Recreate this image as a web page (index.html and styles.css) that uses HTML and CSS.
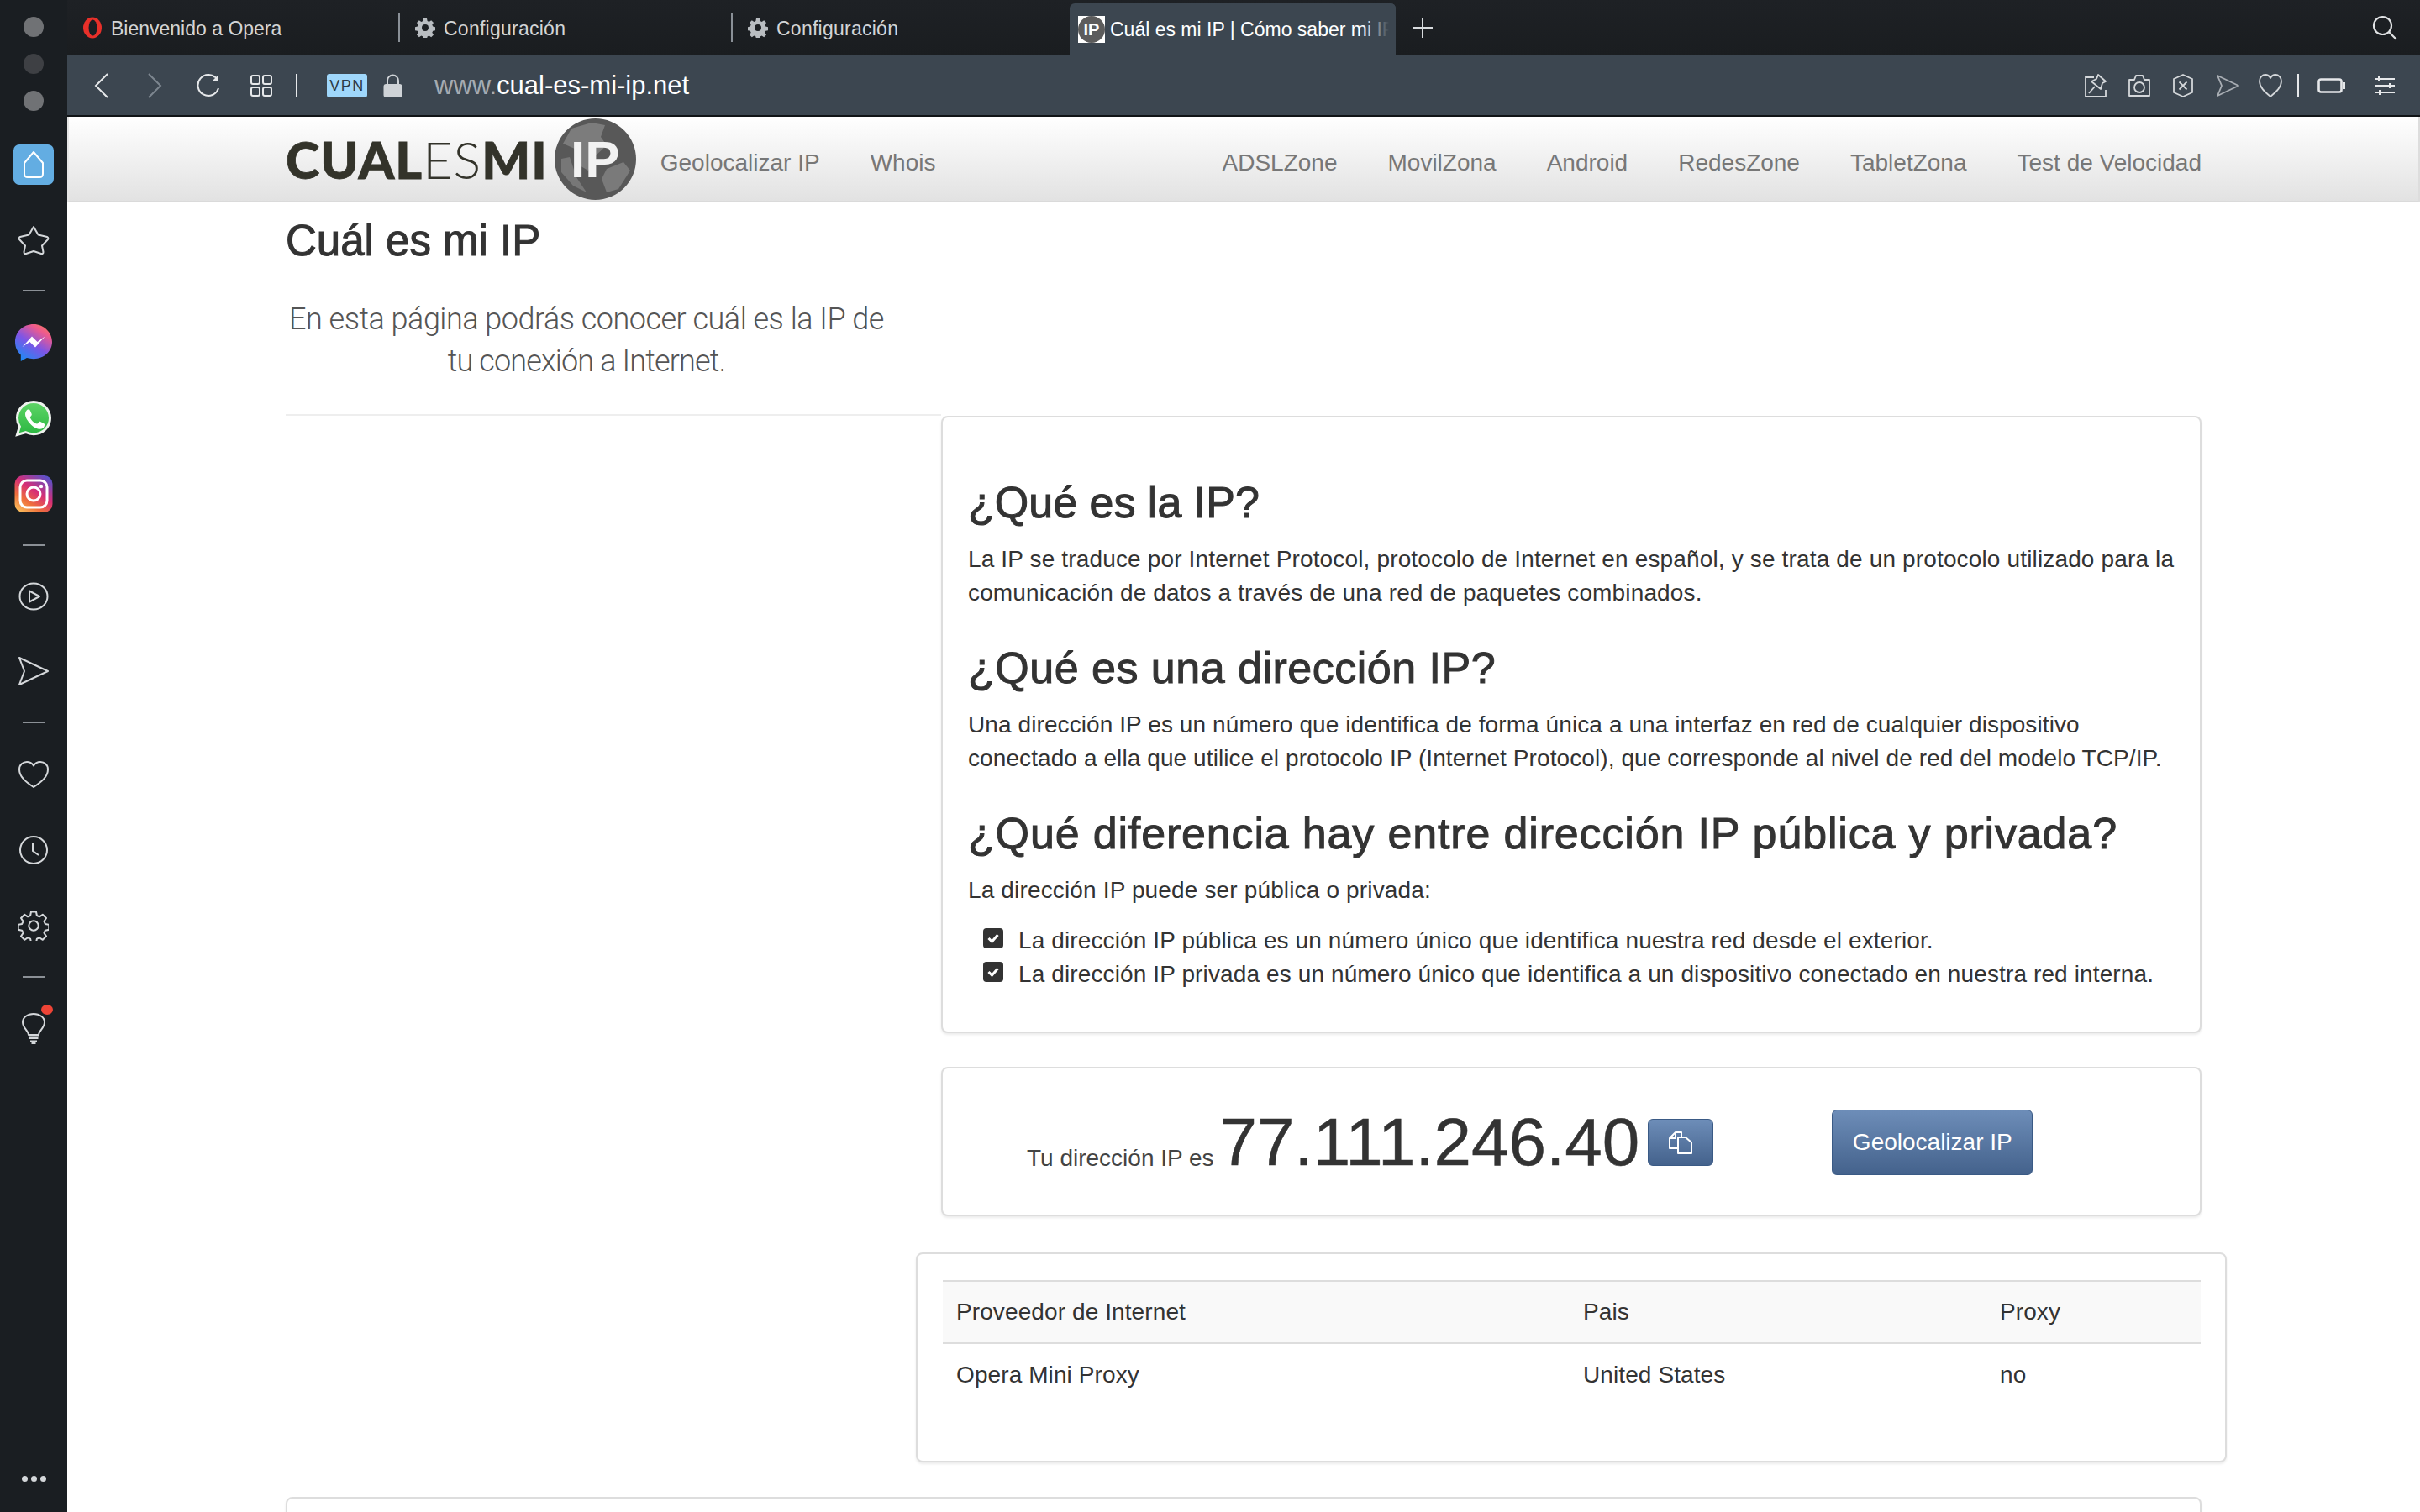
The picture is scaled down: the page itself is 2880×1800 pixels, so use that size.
FILE: index.html
```html
<!DOCTYPE html>
<html lang="es">
<head>
<meta charset="utf-8">
<title>Cuál es mi IP</title>
<link rel="stylesheet" href="styles.css">
</head>
<body>
<svg class="defs" width="0" height="0" aria-hidden="true">
  <defs>
    <linearGradient id="ms" x1="0.2" y1="1" x2="0.85" y2="0"><stop offset="0" stop-color="#1b8cf5"/><stop offset="0.45" stop-color="#7d55e6"/><stop offset="0.8" stop-color="#ee5a8e"/><stop offset="1" stop-color="#f77b5b"/></linearGradient>
    <linearGradient id="ig" x1="0.1" y1="1" x2="0.8" y2="0"><stop offset="0" stop-color="#fbc55f"/><stop offset="0.3" stop-color="#ef6f3c"/><stop offset="0.6" stop-color="#d62e77"/><stop offset="1" stop-color="#5b51c8"/></linearGradient>
    <linearGradient id="wa" x1="0" y1="1" x2="0" y2="0"><stop offset="0" stop-color="#2bb741"/><stop offset="1" stop-color="#5fd567"/></linearGradient>
    <symbol id="gear" viewBox="0 0 24 24"><path fill="#b9bdc1" fill-rule="evenodd" d="M10 1h4l.6 3 2 .9 2.6-1.7 2.8 2.8-1.7 2.6.9 2 3 .6v4l-3 .6-.9 2 1.700 2.600-2.800 2.800-2.600-1.700-2 .9-.6 3h-4l-.6-3-2-.9-2.600 1.700-2.800-2.800 1.700-2.600-.9-2-3-.6v-4l3-.6.9-2-1.700-2.600 2.800-2.800 2.600 1.700 2-.9zM12 8a4 4 0 1 0 0 8a4 4 0 0 0 0-8z"/></symbol>
  </defs>
</svg>
<div class="app">
  <aside class="side">
    <div class="lights">
      <span class="light"></span>
      <span class="light dim"></span>
      <span class="light"></span>
    </div>
    <div class="home">
      <svg width="26" height="34" viewBox="0 0 26 34" fill="none" stroke="#fff" stroke-width="2"><path d="M13 2 L24 15 V28 Q24 32 20 32 H6 Q2 32 2 28 V15 Z" stroke-linejoin="round"/></svg>
    </div>
    <div class="side-item first-item">
      <svg width="38" height="36" viewBox="0 0 38 36" fill="none" stroke="#d4d7da" stroke-width="2" stroke-linejoin="round"><path d="M19 2 L24.500 11.500 L35 14 Q37 15 36 17 L29 24.500 L30.500 32 Q30.500 34.500 28 34 L19 31 L10 34 Q7.500 34.500 7.500 32 L9 24.500 L2 17 Q1 15 3 14 L13.500 11.500 Z"/></svg>
    </div>
    <div class="side-sep"></div>
    <div class="side-item">
      <svg width="46" height="46" viewBox="0 0 46 46"><path fill="url(#ms)" d="M23 1C10.500 1 1 10 1 22c0 6.300 2.600 11.700 6.800 15.500V45l7.100-3.900c2.500.7 5.300 1.100 8.100 1.100 12.500 0 22-9.200 22-20.200S35.500 1 23 1z"/><path fill="#fff" d="M9.500 28 l11.500-12.500 6.500 6.500 9-6.500-11.500 13-6.500-6.500z"/></svg>
    </div>
    <div class="side-item">
      <svg width="44" height="44" viewBox="0 0 44 44"><path fill="url(#wa)" stroke="#eef2ee" stroke-width="3" d="M22 2.500C11.200 2.500 2.500 11 2.500 21.800c0 3.700 1 7 2.900 10L2.500 41.500l10-3c2.800 1.500 6 2.300 9.500 2.300 10.800 0 19.500-8.500 19.500-19S32.800 2.500 22 2.500z"/><path fill="#fff" d="M15.500 11.500c-1 0-3.500 2-3.500 5.500s2.500 7 3 7.700c.5.700 5 7.700 12 9.700 4.500 1.300 7-.7 7.700-3 .4-1.300.4-2.500.3-2.700-.5-.7-5.300-3-6-3-.7 0-1.800 2.500-2.700 2.700-1 .2-3.500-1-5.500-3s-3.200-4-3-4.700c.2-.8 2-2 2-3.300 0-.7-2-5.500-2.700-5.700-.6-.2-1-.2-1.600-.2z"/></svg>
    </div>
    <div class="side-item">
      <svg width="46" height="44" viewBox="0 0 46 44"><rect x="0.500" y="0" width="45" height="44" rx="10" fill="url(#ig)"/><rect x="7" y="6" width="32" height="32" rx="8" fill="none" stroke="#fff" stroke-width="3"/><circle cx="23" cy="22" r="8" fill="none" stroke="#fff" stroke-width="3"/><circle cx="32" cy="13" r="2.200" fill="#fff"/></svg>
    </div>
    <div class="side-sep tight-sep"></div>
    <div class="side-item tight">
      <svg width="36" height="34" viewBox="0 0 36 34" fill="none" stroke="#d4d7da" stroke-width="2"><ellipse cx="18" cy="17" rx="16.500" ry="15.500"/><path d="M13 10.500 L25 17 L13 23.500 Z" stroke-linejoin="round"/></svg>
    </div>
    <div class="side-item tight">
      <svg width="38" height="36" viewBox="0 0 38 36" fill="none" stroke="#d4d7da" stroke-width="2" stroke-linejoin="round"><path d="M2 2 L36 18 L2 34 L8 18 Z"/></svg>
    </div>
    <div class="side-sep"></div>
    <div class="side-item">
      <svg width="38" height="34" viewBox="0 0 38 34" fill="none" stroke="#d4d7da" stroke-width="2" stroke-linejoin="round"><path d="M19 32 C10 26 2 20 2 11 C2 5 6.500 2 11 2 C15 2 17.500 4 19 6.500 C20.500 4 23 2 27 2 C31.500 2 36 5 36 11 C36 20 28 26 19 32 Z"/></svg>
    </div>
    <div class="side-item">
      <svg width="36" height="36" viewBox="0 0 36 36" fill="none" stroke="#d4d7da" stroke-width="2"><circle cx="18" cy="18" r="16"/><path d="M17 9 V19 L24 24"/></svg>
    </div>
    <div class="side-item">
      <svg width="36" height="36" viewBox="0 0 24 24" fill="none" stroke="#d4d7da" stroke-width="1.350" stroke-linejoin="round"><path d="M10 1h4l.6 3 2 .9 2.600-1.700 2.800 2.800-1.700 2.600.9 2 3 .6v4l-3 .6-.9 2 1.700 2.600-2.800 2.800-2.600-1.700-2 .9-.6 3h-4l-.6-3-2-.9-2.600 1.700-2.800-2.800 1.700-2.600-.9-2-3-.6v-4l3-.6.9-2-1.700-2.600 2.800-2.800 2.600 1.700 2-.9z"/><circle cx="12" cy="12" r="3.800"/></svg>
    </div>
    <div class="side-sep tight-sep"></div>
    <div class="side-item bulb-item">
      <svg width="30" height="38" viewBox="0 0 30 38" fill="none" stroke="#d4d7da" stroke-width="2"><path d="M9 27 C9 22 2 19 2 12 C2 6 8 2 15 2 C22 2 28 6 28 12 C28 19 21 22 21 27 Z" stroke-linejoin="round"/><path d="M9 27.500 H21 M9.500 31 H20.500 M11 34.500 H19"/><path d="M12.500 37 H17.500"/></svg>
      <span class="notif"></span>
    </div>
    <div class="side-dots"><span></span><span></span><span></span></div>
  </aside>

  <div class="main">
    <div class="tabs">
      <div class="tab">
        <svg class="favicon" width="24" height="26" viewBox="0 0 24 26"><ellipse cx="12" cy="13" rx="11" ry="12.500" fill="#e8302a"/><ellipse cx="12.500" cy="13" rx="5" ry="9.500" fill="#1b1e22"/></svg>
        <span class="tab-label">Bienvenido a Opera</span>
      </div>
      <div class="tab">
        <svg class="favicon" width="24" height="24"><use href="#gear"/></svg>
        <span class="tab-label tab-config">Configuración</span>
      </div>
      <div class="tab tab-last">
        <svg class="favicon" width="24" height="24"><use href="#gear"/></svg>
        <span class="tab-label tab-config">Configuración</span>
      </div>
      <div class="tab-active">
        <span class="fav-ip"><span class="fav-ip-disc">IP</span></span>
        <span class="tab-label tab-label-active">Cuál es mi IP | Cómo saber mi IP</span>
      </div>
      <svg class="plus" width="24" height="24" viewBox="0 0 24 24" stroke="#d8dbde" stroke-width="2"><path d="M12 0 V24 M0 12 H24"/></svg>
      <svg class="search" width="30" height="30" viewBox="0 0 30 30" fill="none" stroke="#e0e2e4" stroke-width="2.200"><circle cx="12.500" cy="12.500" r="10.500"/><path d="M20 20 L29 29"/></svg>
    </div>

    <div class="toolbar">
      <svg class="tb-back" width="18" height="30" viewBox="0 0 18 30" fill="none" stroke="#e6e8ea" stroke-width="2"><path d="M16 1 L2 15 L16 29"/></svg>
      <svg class="tb-forward" width="18" height="30" viewBox="0 0 18 30" fill="none" stroke="#7d8690" stroke-width="2"><path d="M2 1 L16 15 L2 29"/></svg>
      <svg class="tb-reload" width="28" height="28" viewBox="0 0 28 28" fill="none" stroke="#e6e8ea" stroke-width="2"><path d="M24 6 A12.500 12.500 0 1 0 26 17"/><path d="M26 1 V9 H18" fill="#e6e8ea" stroke="none"/></svg>
      <svg class="tb-grid" width="26" height="26" viewBox="0 0 26 26" fill="none" stroke="#e6e8ea" stroke-width="2"><rect x="1" y="1" width="10" height="10" rx="2"/><rect x="15" y="1" width="10" height="10" rx="2"/><rect x="1" y="15" width="10" height="10" rx="2"/><rect x="15" y="15" width="10" height="10" rx="2"/></svg>
      <span class="tb-sep"></span>
      <span class="vpn">VPN</span>
      <svg class="tb-lock" width="23" height="28" viewBox="0 0 23 28"><path fill="none" stroke="#cfd3d7" stroke-width="2" d="M5 14 V8 A6.500 6.500 0 0 1 18 8 V14"/><rect x="0.500" y="12" width="22" height="16" rx="3" fill="#cfd3d7"/></svg>
      <div class="url"><span class="url-www">www.</span>cual-es-mi-ip.net</div>
      <div class="tb-right">
        <svg class="i-pin" width="26" height="28" viewBox="0 0 26 28" fill="none" stroke="#d4d7da" stroke-width="1.800"><path d="M11 4 H1 V27 H25 V19"/><path d="M5 23 L12 15"/><path d="M16 1 L25 9 L21 11 L19 18 L8 9 L14 6 Z" stroke-linejoin="round"/></svg>
        <svg class="i-cam" width="26" height="26" viewBox="0 0 26 26" fill="none" stroke="#d4d7da" stroke-width="1.800"><path d="M1 6 H7 L9 1 H17 L19 6 H25 V25 H1 Z" stroke-linejoin="round"/><circle cx="13" cy="15" r="6"/></svg>
        <svg class="i-shield" width="24" height="28" viewBox="0 0 24 28" fill="none" stroke="#d4d7da" stroke-width="1.800"><path d="M12 1 L23 6 V22 L12 27 L1 22 V6 Z" stroke-linejoin="round"/><path d="M7.500 9.500 L16.500 18.500 M16.500 9.500 L7.500 18.500"/></svg>
        <svg class="i-send" width="27" height="26" viewBox="0 0 27 26" fill="none" stroke="#a9aeb4" stroke-width="1.800" stroke-linejoin="round"><path d="M1 1 L26 13 L1 25 L6 13 Z"/></svg>
        <svg class="i-heart" width="28" height="28" viewBox="0 0 28 28" fill="none" stroke="#d4d7da" stroke-width="1.800" stroke-linejoin="round"><path d="M14 27 C7 21 1 16 1 8.500 C1 4 4.500 1 8 1 C11 1 13 3 14 5 C15 3 17 1 20 1 C23.500 1 27 4 27 8.500 C27 16 21 21 14 27 Z"/></svg>
        <span class="tb-sep tb-sep-right"></span>
        <svg class="i-batt" width="33" height="18" viewBox="0 0 33 18" fill="none" stroke="#e6e8ea" stroke-width="2.600"><rect x="1.500" y="1.500" width="27" height="15" rx="2.500"/><rect x="30" y="5" width="3" height="8" fill="#e6e8ea" stroke="none"/></svg>
        <svg class="i-sliders" width="24" height="24" viewBox="0 0 24 24" stroke="#e6e8ea" stroke-width="2"><path d="M0 4 H24 M0 12 H24 M0 20 H24 M5 1 V7 M18 9 V15 M6 17 V23"/></svg>
      </div>
    </div>

    <div class="page">
      <nav class="nav">
        <a class="logo">
          <span class="logo-word"><b>CUAL</b><span class="logo-thin">ES</span><b>MI</b></span>
          <span class="logo-disc">
            <svg class="logo-map" width="97" height="97" viewBox="0 0 97 97"><path fill="#7c7c7c" d="M20 12 L44 5 L60 8 L55 22 L62 32 L48 45 L40 62 L28 55 L24 36 L10 30 Z"/><path fill="#7a7a7a" d="M62 60 L82 52 L90 62 L76 84 L62 88 L56 72 Z"/><path fill="#777" d="M8 48 L18 46 L26 70 L38 88 L22 80 L8 64 Z"/></svg>
            <span class="logo-ip">IP</span>
          </span>
        </a>
        <a class="nav-link">Geolocalizar IP</a>
        <a class="nav-link">Whois</a>
        <span class="nav-space"></span>
        <a class="nav-link">ADSLZone</a>
        <a class="nav-link">MovilZona</a>
        <a class="nav-link">Android</a>
        <a class="nav-link">RedesZone</a>
        <a class="nav-link">TabletZona</a>
        <a class="nav-link">Test de Velocidad</a>
      </nav>

      <div class="container">
        <h1 class="title">Cuál es mi IP</h1>
        <p class="lead">En esta página podrás conocer cuál es la IP de<br><span class="lead-2">tu conexión a Internet.</span></p>
        <div class="columns">
          <div class="left"><hr class="rule"></div>
          <div class="right">
            <section class="card card-info">
              <h2>¿Qué es la IP?</h2>
              <p>La IP se traduce por Internet Protocol, protocolo de Internet en español, y se trata de un protocolo utilizado para la comunicación de datos a través de una red de paquetes combinados.</p>
              <h2 class="h-mid">¿Qué es una dirección IP?</h2>
              <p class="p-narrow">Una dirección IP es un número que identifica de forma única a una interfaz en red de cualquier dispositivo conectado a ella que utilice el protocolo IP (Internet Protocol), que corresponde al nivel de red del modelo TCP/IP.</p>
              <h2 class="h-long">¿Qué diferencia hay entre dirección IP pública y privada?</h2>
              <p class="p-tight">La dirección IP puede ser pública o privada:</p>
              <ul class="checks">
                <li><span class="check"><svg width="14" height="12" viewBox="0 0 14 12" fill="none" stroke="#fff" stroke-width="3"><path d="M1.500 6 L5.500 10 L12.500 2"/></svg></span>La dirección IP pública es un número único que identifica nuestra red desde el exterior.</li>
                <li><span class="check"><svg width="14" height="12" viewBox="0 0 14 12" fill="none" stroke="#fff" stroke-width="3"><path d="M1.500 6 L5.500 10 L12.500 2"/></svg></span>La dirección IP privada es un número único que identifica a un dispositivo conectado en nuestra red interna.</li>
              </ul>
            </section>

            <section class="card card-ip">
              <span class="ip-label">Tu dirección IP es</span>
              <span class="ip-value">77.111.246.40</span>
              <button class="btn btn-copy"><svg width="30" height="28" viewBox="0 0 30 28" fill="none" stroke="#fff" stroke-width="2" stroke-linejoin="round"><path d="M11 21 H2 V9 L9 2 H16 V7"/><path d="M9 2 V9 H2"/><path d="M12 8 H21 L28 14 V27 H12 Z"/></svg></button>
              <button class="btn btn-geo">Geolocalizar IP</button>
            </section>

            <section class="card card-table">
              <table class="isp">
                <colgroup><col class="c1"><col class="c2"><col class="c3"></colgroup>
                <thead><tr><th>Proveedor de Internet</th><th>Pais</th><th>Proxy</th></tr></thead>
                <tbody><tr><td>Opera Mini Proxy</td><td>United States</td><td>no</td></tr></tbody>
              </table>
            </section>
          </div>
        </div>
        <section class="card card-next"></section>
      </div>
    </div>
  </div>
</div>
</body>
</html>
```
FILE: styles.css
```css
* { box-sizing: border-box; }
html, body { margin: 0; height: 100%; overflow: hidden; background: #fff; }
body { font-family: "Liberation Sans", Arial, sans-serif; color: #333; }
.defs { position: absolute; }
.app { display: flex; height: 1800px; width: 2880px; }

.side { width: 80px; flex: none; background: #1a1e22; display: flex; flex-direction: column; align-items: center; }
.lights { display: flex; flex-direction: column; align-items: center; gap: 20px; padding-top: 20px; }
.light { width: 24px; height: 24px; border-radius: 50%; background: #707275; }
.light.dim { background: #3e4044; }
.home { width: 48px; height: 48px; margin-top: 40px; border-radius: 7px; background: #63ade2; display: flex; align-items: center; justify-content: center; }
.side-item { height: 90px; width: 80px; flex: none; display: flex; align-items: center; justify-content: center; position: relative; }
.side-item.tight { height: 89px; }
.first-item { margin-top: 21px; margin-bottom: -2px; }
.side-sep { width: 27px; height: 2px; margin: 16px 0; background: #8b9096; flex: none; }
.side-sep.tight-sep { margin: 15px 0; }
.notif { position: absolute; left: 49px; top: 17px; width: 14px; height: 12px; border-radius: 50%; background: #ee4436; }
.side-dots { margin-top: auto; margin-bottom: 36px; display: flex; gap: 4px; }
.side-dots span { width: 7px; height: 7px; border-radius: 50%; background: #d4d7da; }

.main { flex: 1; min-width: 0; display: flex; flex-direction: column; }
.tabs { height: 66px; flex: none; display: flex; align-items: center; background: linear-gradient(#1e2125, #1a1d20); position: relative; }
.tab { width: 396px; height: 34px; display: flex; align-items: center; padding-left: 18px; border-right: 2px solid #8a9097; color: #d2d4d6; }
.tab-last { width: 400px; border-right: none; }
.tab-label { font-family: "Liberation Sans", sans-serif; font-size: 23px; line-height: 34px; padding-top: 1px; margin-left: 10px; white-space: nowrap; }
.tab-config { letter-spacing: 0.25px; }
.tab-active { width: 388px; height: 62px; margin-top: 4px; margin-left: 1px; background: #3c4650; border-radius: 6px 6px 0 0; display: flex; align-items: center; padding-left: 10px; overflow: hidden; position: relative; }
.tab-active::after { content: ""; position: absolute; right: 0; top: 0; bottom: 0; width: 40px; background: linear-gradient(90deg, rgba(60,70,80,0), #3c4650 80%); }
.tab-label-active { color: #fff; margin-left: 6px; padding-top: 0; }
.fav-ip { width: 32px; height: 32px; background: #fff; flex: none; display: block; }
.fav-ip-disc { display: block; width: 32px; height: 32px; border-radius: 50%; background: #5c5c5c; color: #fff; font-weight: 700; font-size: 20px; line-height: 32px; text-align: center; }
.plus { margin-left: 20px; }
.search { margin-left: auto; margin-right: 27px; }

.toolbar { height: 73px; flex: none; background: #3c4650; display: flex; align-items: center; padding-left: 32px; border-bottom: 2px solid #111417; }
.tb-forward { margin-left: 45px; }
.tb-reload { margin-left: 41px; }
.tb-grid { margin-left: 36px; }
.tb-sep { width: 2px; height: 28px; margin-left: 28px; background: #e6e8ea; }
.vpn { margin-left: 35px; width: 48px; height: 28px; border-radius: 3px; background: #9fd7fb; color: #2b3a48; font-size: 18px; letter-spacing: 1.500px; text-align: center; line-height: 28px; }
.tb-lock { margin-left: 19px; }
.url { margin-left: 38px; font-size: 31px; color: #fff; }
.url-www { color: #a5abb1; }
.tb-right { margin-left: auto; display: flex; align-items: center; padding-right: 30px; }
.i-cam { margin-left: 26px; }
.i-shield { margin-left: 27px; }
.i-send { margin-left: 28px; }
.i-heart { margin-left: 23px; }
.tb-sep-right { margin-left: 18px; }
.i-batt { margin-left: 22px; }
.i-sliders { margin-left: 35px; }

.page { flex: 1; min-height: 0; overflow: hidden; background: #fff; }
.nav { height: 102px; padding: 10px 258px 0; display: flex; align-items: center; gap: 60px; background: linear-gradient(#fff, #e2e2e2); border-bottom: 2px solid #dadada; border-left: 2px solid #e6e6e6; border-right: 2px solid #ddd; }
.nav-link { font-size: 28px; color: #777; white-space: nowrap; }
.nav-space { flex: 1; }
.logo { display: flex; align-items: center; margin-right: -31px; margin-top: -10px; height: 100px; }
.logo-word { font-family: Lato, sans-serif; font-size: 61px; color: #33332a; letter-spacing: 1px; line-height: 1; }
.logo-word b { font-weight: 900; -webkit-text-stroke: 0.8px #33332a; }
.logo-thin { font-weight: 300; }
.logo-disc { width: 97px; height: 97px; border-radius: 50%; background: #585858; margin-left: 8px; position: relative; display: flex; align-items: center; justify-content: center; overflow: hidden; }
.logo-map { position: absolute; left: 0; top: 0; }
.logo-ip { position: relative; font-family: "Liberation Sans", sans-serif; font-weight: 700; font-size: 62px; color: #f2f2f2; }

.container { width: 2280px; margin-left: 260px; }
.title { margin: 16px 0 0; font-size: 51px; font-weight: 400; line-height: 60px; color: #333; -webkit-text-stroke: 1px #333; }
.lead { width: 716px; margin: 38px 0 0; font-family: Roboto, sans-serif; font-weight: 300; font-size: 36px; line-height: 50px; text-align: center; color: #555; letter-spacing: -0.5px; white-space: nowrap; }
.lead-2 { letter-spacing: -0.85px; }
.columns { display: grid; grid-template-columns: 780px 1500px; }
.left { padding-top: 38px; }
.rule { margin: 0; border: 0; border-top: 2px solid #eee; }
.right { padding-top: 40px; display: flex; flex-direction: column; }
.card { border: 2px solid #ddd; border-radius: 8px; background: #fff; box-shadow: 0 2px 3px rgba(0,0,0,.08); }
.card-info { height: 735px; padding: 71px 30px 0; }
.card-info h2 { margin: 0 0 18px; font-size: 52px; line-height: 60px; font-weight: 400; color: #333; -webkit-text-stroke: 1px #333; }
.card-info .h-mid { letter-spacing: 0.5px; }
.card-info .h-long { letter-spacing: 0.84px; }
.card-info p { margin: 0 0 39px; font-size: 28px; line-height: 40px; letter-spacing: 0.15px; color: #333; }
.card-info .p-narrow { letter-spacing: 0.09px; }
.card-info .p-tight { margin-bottom: 20px; }
.checks { list-style: none; margin: 0; padding: 0 0 0 18px; }
.checks li { font-size: 28px; line-height: 40px; letter-spacing: 0.12px; display: flex; align-items: center; white-space: nowrap; }
.check { width: 24px; height: 24px; margin-right: 18px; margin-top: -6px; border-radius: 4px; background: #333; display: flex; align-items: center; justify-content: center; }
.card-ip { margin-top: 40px; height: 178px; display: flex; align-items: center; padding: 2px 0 0 100px; }
.ip-label { font-size: 28px; align-self: flex-end; padding-bottom: 51px; color: #444; }
.ip-value { font-size: 80px; margin-left: 7px; color: #333; line-height: 1; -webkit-text-stroke: 0.5px #333; }
.btn { border-radius: 6px; border: 1px solid #3a5a85; background: linear-gradient(#6d8db8, #44628c); color: #fff; font-family: inherit; padding: 0; }
.btn-copy { width: 78px; height: 56px; margin-left: 10px; display: flex; align-items: center; justify-content: center; }
.btn-geo { width: 239px; height: 78px; margin-left: 141px; font-size: 28px; }
.card-table { margin: 43px -30px 0; height: 250px; padding: 31px 30px 0; }
.isp { width: 1497px; border-collapse: collapse; table-layout: fixed; font-size: 28px; letter-spacing: 0.1px; color: #333; }
.c1 { width: 746px; }
.c2 { width: 496px; }
.c3 { width: 255px; }
.isp th { height: 74px; font-weight: 400; text-align: left; padding: 0 16px; background: #f9f9f9; border-top: 2px solid #ddd; border-bottom: 2px solid #ddd; }
.isp td { height: 74px; padding: 0 16px; }
.card-next { margin-top: 41px; height: 200px; }
```
